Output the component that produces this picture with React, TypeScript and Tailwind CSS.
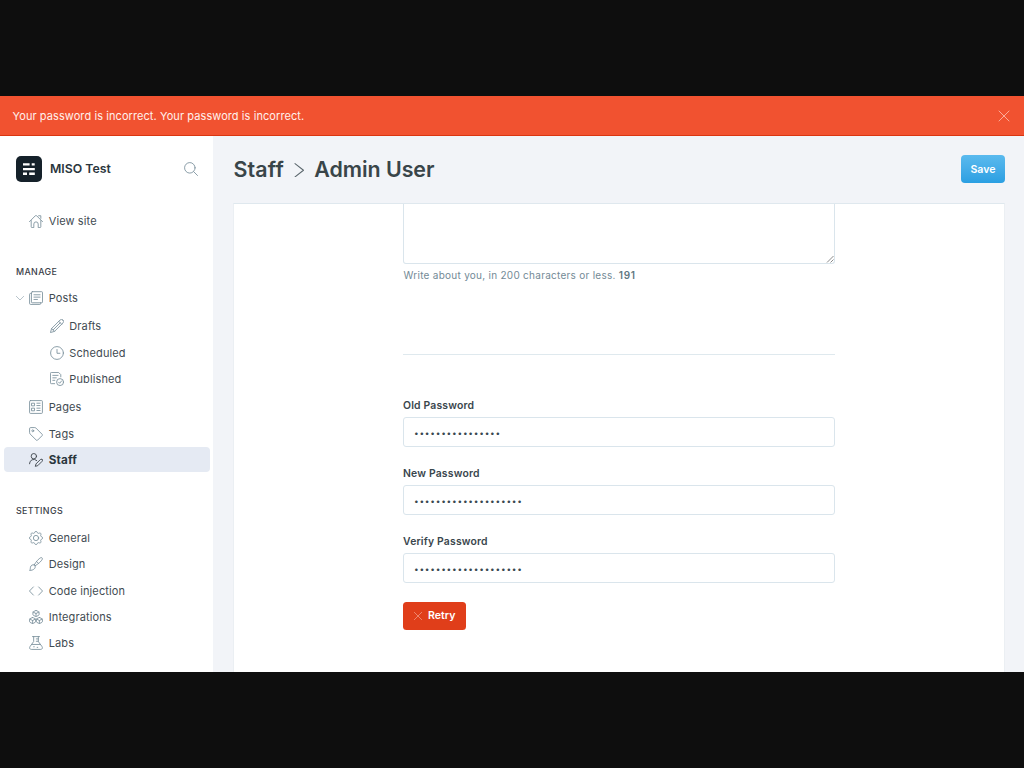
import type { ReactNode } from "react";

function Icon({ children, className = "size-[14px] text-[#7b919d]", sw = 1.5 }: { children: ReactNode; className?: string; sw?: number }) {
  return (
    <svg viewBox="0 0 24 24" fill="none" stroke="currentColor" strokeWidth={sw} strokeLinecap="round" strokeLinejoin="round" className={`shrink-0 ${className}`}>
      {children}
    </svg>
  );
}

const gearPoints = Array.from({ length: 64 }, (_, i) => {
  const a = (i * Math.PI) / 32;
  const r = 10.1 + 1.2 * Math.tanh(2 * Math.cos(8 * a));
  return `${(12 + r * Math.sin(a)).toFixed(2)},${(12 - r * Math.cos(a)).toFixed(2)}`;
}).join(" ");

const icons = {
  home: (
    <path d="M.75 13.2 10.9 3a1.5 1.5 0 0 1 2.2 0l10.150 10.200M3.750 11.200v10.550a1.500 1.500 0 0 0 1.500 1.500h3v-6a3.750 3.750 0 0 1 7.500 0v6h3a1.500 1.500 0 0 0 1.500-1.500V11.200M16.500 3h3.750v4.500" />
  ),
  posts: (
    <>
      <rect x="4.200" y="1.200" width="19" height="19" rx="1.500" />
      <path d="M4.200 4.200H2.500a1.500 1.500 0 0 0-1.500 1.500v15.600A1.700 1.700 0 0 0 2.700 23h15.800a1.500 1.500 0 0 0 1.500-1.500v-1.300M8.500 6.500h10.500M8.500 10.500h10.500M8.500 14.500h6" />
    </>
  ),
  pencil: (
    <path d="M22.200 1.800a3.500 3.500 0 0 0-5 0L2.800 16.200.8 23.200l7-2L22.200 6.800a3.500 3.500 0 0 0 0-5zM15 4l5 5M2.800 16.200l5 5M17.500 6.500 5.300 18.700" />
  ),
  clock: (
    <>
      <circle cx="12" cy="12" r="11" />
      <path d="M12 6v6.500h5" />
    </>
  ),
  published: (
    <>
      <circle cx="17.300" cy="17.300" r="6" />
      <path d="m14.800 17.500 1.800 1.800 3.300-4M8 20H2.300A1.500 1.500 0 0 1 .8 18.500V2.300A1.500 1.500 0 0 1 2.300.8h12.500L18.500 4.500v3.800M4.800 5.800h9M4.800 10h6M4.800 14.300h3.500" />
    </>
  ),
  pages: (
    <>
      <rect x="1" y="1" width="22" height="22" rx="1.500" />
      <path d="M5 5.500h4.500v4.500H5zM5 14h4.500v4.500H5zM13.500 5.500h5.500M13.500 9.500h5.500M13.500 14h5.500M13.500 18h5.500" />
    </>
  ),
  tag: (
    <>
      <path d="M1 2.500A1.500 1.500 0 0 1 2.500 1h7.400a3 3 0 0 1 2.100.9l10.600 10.700a1.500 1.500 0 0 1 0 2.100l-7.900 7.900a1.500 1.500 0 0 1-2.100 0L1.900 12A3 3 0 0 1 1 9.900z" />
      <circle cx="6.500" cy="6.500" r="1.600" />
    </>
  ),
  staff: (
    <>
      <circle cx="8.300" cy="5.500" r="4.600" />
      <path d="M.8 18.500a7.500 7.500 0 0 1 12.500-5.600M22.500 11.200a2.100 2.100 0 0 0-3 0l-7.500 7.500-1.200 4.200 4.200-1.200 7.500-7.500a2.100 2.100 0 0 0 0-3z" />
    </>
  ),
  gear: (
    <>
      <polygon points={gearPoints} />
      <circle cx="12" cy="12" r="4.500" />
    </>
  ),
  brush: (
    <path d="M9 13.500C12 8 17 2.500 20.200 1.200c1.800-.7 3.300.8 2.600 2.600C21.500 7 16 12 10.500 15M9 13.500a4 4 0 0 1 1.500 1.500c1.300 4-2.500 8-9.500 8 1.500-1.500 1-3 1.500-5.500.7-3.300 3.500-5 6.500-4zM13.500 8.200l2.400 2.400" />
  ),
  code: <path d="M7.500 5 .8 12l6.700 7M16.500 5l6.700 7-6.700 7" />,
  boxes: (
    <path d="M12 .9q.5 0 1 .3l3.400 1.700q.9.500.9 1.400v3.500q0 .9-.9 1.400L13 10.900q-1 .5-2 0L7.600 9.200q-.9-.5-.9-1.400V4.300q0-.9.900-1.400L11 1.200q.5-.3 1-.3zM7 3.500l5 2.500 5-2.500M12 6v5M6.200 12.900q.5 0 1 .3l3.300 1.700q.9.500.9 1.400v3.500q0 .9-.9 1.400l-3.300 1.700q-1 .5-2 0l-3.300-1.700q-.9-.5-.9-1.400v-3.500q0-.9.9-1.400l3.300-1.700q.5-.3 1-.3zM1.400 15.500l4.800 2.500 4.800-2.500M6.200 18v5M17.800 12.900q.5 0 1 .3l3.300 1.700q.9.500.9 1.400v3.500q0 .9-.9 1.400l-3.300 1.700q-1 .5-2 0l-3.300-1.700q-.9-.5-.9-1.400v-3.500q0-.9.9-1.400l3.300-1.700q.5-.3 1-.3zM13 15.500l4.800 2.500 4.800-2.500M17.800 18v5" />
  ),
  flask: (
    <path d="M6 1h12M8 1v8.500L1.800 18c-1.700 2.300-.5 5 2.200 5h16c2.700 0 3.900-2.700 2.200-5L16 9.500V1M5 14.500h14M12.500 5H16M12.500 9H16M8 18.500h1M14 19.500h1" />
  ),
};

function NavItem({ icon, label, sub, active, className = "" }: { icon: ReactNode; label: string; sub?: boolean; active?: boolean; className?: string }) {
  return (
    <a className={`flex h-[26.4px] items-center rounded-[4px] ${sub ? "pl-[45.600px]" : "pl-[25px]"} ${className}`}>
      <Icon className={active ? "size-[14px] text-[#394047]" : "size-[14px] text-[#7b919d]"}>{icon}</Icon>
      <span className={`ml-[5.700px] leading-4 ${active ? "text-[11.700px] font-bold tracking-[0.150px] text-[#2b363d]" : "text-[11px] tracking-[0.120px] text-[#3f4b52]"}`}>{label}</span>
    </a>
  );
}

function PasswordField({ label, value }: { label: string; value: string }) {
  return (
    <label className="mb-[19px] block h-[49px]">
      <span className="block h-[19px] pt-px text-[10.400px] leading-[14px] font-semibold tracking-[0.180px] text-[#3a464d]">{label}</span>
      <input
        type="password"
        defaultValue={value}
        className="block h-[30px] w-full rounded-[3px] border border-[#dae5ec] bg-white px-[10px] pt-px text-[8.300px] tracking-[0.770px] text-[#394850] outline-none"
      />
    </label>
  );
}

export default function App() {
  return (
    <div className="h-[768px] w-[1024px] overflow-hidden bg-[#0e0e0e] py-24 font-['Inter',sans-serif]">
      <div className="flex h-[576px] flex-col overflow-hidden bg-[#f2f4f8]">
        <div className="flex h-10 shrink-0 items-center justify-between border-b border-[#da3510] bg-[#f15230] pr-[14px] pl-[12.500px]">
          <span className="text-[11px] leading-4 tracking-[0.080px] text-[#fff0ec]">Your password is incorrect. Your password is incorrect.</span>
          <Icon className="size-3 text-[#ffc4b4]" sw={1.6}>
            <path d="M2 2l20 20M22 2 2 22" />
          </Icon>
        </div>
        <div className="flex min-h-0 flex-1">
          <nav className="flex w-[214px] shrink-0 flex-col overflow-hidden border-r border-[#f2f4f8] bg-white px-1">
            <div className="mt-[19.500px] flex h-[26px] items-center pr-[11.500px] pl-3">
              <svg viewBox="0 0 26 26" className="size-[26px] shrink-0">
                <rect width="26" height="26" rx="5" fill="#15212a" />
                <path d="M7 7.300h6.600v2.300H7zM15.700 7.300h3v2.300h-3zM7 12h11.800v2.300H7zM7 16.600h4v2.300H7zM13.200 16.600h5.600v2.300h-5.600z" fill="#fff" />
              </svg>
              <span className="ml-2 flex-1 text-[12.300px] leading-5 font-semibold text-[#2b363d]">MISO Test</span>
              <Icon className="size-[14px] text-[#7b919d]">
                <circle cx="10" cy="10" r="9" />
                <path d="m16.500 16.500 6.700 6.700" />
              </Icon>
            </div>
            <NavItem icon={icons.home} label="View site" className="mt-[26.500px]" />
            <h4 className="mt-[29.800px] h-4 pl-3 text-[8.900px] leading-4 font-medium tracking-[0.350px] text-[#394047]">MANAGE</h4>
            <div className="mt-[4.900px] flex items-center">
              <span className="flex w-[25px] justify-end pr-[4.800px]">
                <Icon className="size-2 text-[#a5b4bd]" sw={2.400}>
                  <path d="m1 7 11 11L23 7" />
                </Icon>
              </span>
              <NavItem icon={icons.posts} label="Posts" className="-ml-[25px]" />
            </div>
            <NavItem icon={icons.pencil} label="Drafts" sub className="mt-[1.500px]" />
            <NavItem icon={icons.clock} label="Scheduled" sub />
            <NavItem icon={icons.published} label="Published" sub />
            <NavItem icon={icons.pages} label="Pages" className="mt-[1.900px]" />
            <NavItem icon={icons.tag} label="Tags" />
            <div className="mt-[0.300px] mb-[1.100px] flex h-[25px] w-[205.500px] items-center rounded-[4px] bg-[#e5eaf3]">
              <NavItem icon={icons.staff} label="Staff" active />
            </div>
            <h4 className="mt-[29.500px] h-4 pl-3 text-[8.900px] leading-4 font-medium tracking-[0.350px] text-[#394047]">SETTINGS</h4>
            <NavItem icon={icons.gear} label="General" className="mt-[6px]" />
            <NavItem icon={icons.brush} label="Design" />
            <NavItem icon={icons.code} label="Code injection" />
            <NavItem icon={icons.boxes} label="Integrations" />
            <NavItem icon={icons.flask} label="Labs" />
          </nav>
          <main className="flex min-w-0 flex-1 flex-col pr-[19px] pl-[19px]">
            <header className="flex h-[67px] shrink-0 items-center justify-between pb-px">
              <h2 className="flex items-center text-[21.400px] leading-7 font-semibold text-[#394549]">
                <span className="pl-[0.500px] tracking-[0.150px]">Staff</span>
                <Icon className="mx-[8px] mt-[2px] size-[14.500px] text-[#5a666c]" sw={1.700}>
                  <path d="M5 1 19 12 5 23" />
                </Icon>
                <span className="tracking-[-0.050px]">Admin User</span>
              </h2>
              <button className="h-7 w-11 rounded-[4px] bg-linear-to-b from-[#5abaee] to-[#2a9fe2] pt-px text-[10.600px] font-semibold text-white">Save</button>
            </header>
            <section className="min-h-0 flex-1 overflow-hidden border border-b-0 border-[#ebeff3] border-t-[#dfe8ee] bg-white pl-[169px]">
              <div className="w-[432px]">
                <div className="relative">
                  <textarea className="block h-[60px] w-full resize-none rounded-b-[3px] border border-t-0 border-[#dae5ec] bg-white outline-none" />
                  <svg viewBox="0 0 8 8" className="absolute right-px bottom-px size-2" stroke="#8a8a8a" fill="none">
                    <path d="M1 7.500 7.500 1M4.500 7.500l3-3" />
                  </svg>
                </div>
                <p className="mt-[3px] h-[17px] pl-[0.500px] text-[10px] leading-4 tracking-[0.270px] text-[#738a96]">
                  Write about you, in 200 characters or less. <b className="font-semibold tracking-[0.700px] text-[#5f7782]">191</b>
                </p>
                <hr className="mt-[70px] mb-[43px] border-[#dfe9ee]" />
                <PasswordField label="Old Password" value="aaaaaaaaaaaaaaaa" />
                <PasswordField label="New Password" value="aaaaaaaaaaaaaaaaaaaa" />
                <PasswordField label="Verify Password" value="aaaaaaaaaaaaaaaaaaaa" />
                <button className="-mt-[0.400px] flex h-7 w-[62.500px] items-center rounded-[3.500px] bg-[#e03e1a] pl-[11px] text-[10.600px] font-semibold text-white">
                  <Icon className="mr-[6px] size-2 text-[#f3a08c]" sw={2.200}>
                    <path d="M1 1l22 22M23 1 1 23" />
                  </Icon>
                  Retry
                </button>
              </div>
            </section>
          </main>
        </div>
      </div>
    </div>
  );
}
